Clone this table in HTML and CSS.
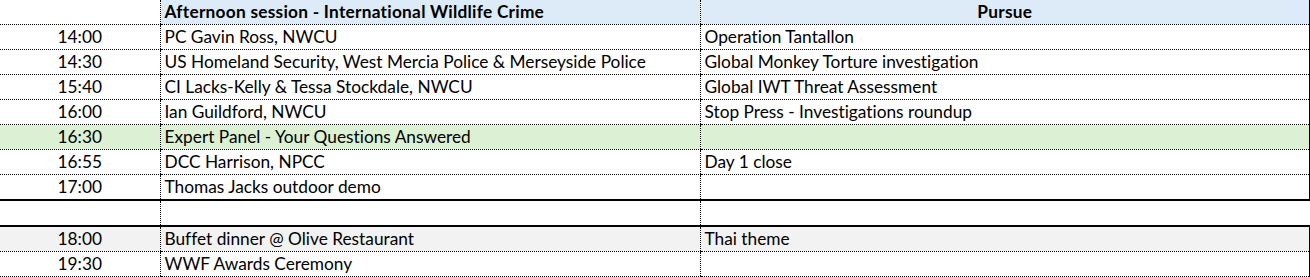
FILE: index.html
```html
<!DOCTYPE html>
<html>
<head>
<meta charset="utf-8">
<link rel="stylesheet" href="styles.css">
</head>
<body>
<table class="sheet">
  <colgroup>
    <col class="c-time">
    <col class="c-event">
    <col class="c-pursue">
  </colgroup>
  <tr class="head">
    <td class="time blank"></td>
    <td class="event bold">Afternoon session - International Wildlife Crime</td>
    <td class="pursue bold center">Pursue</td>
  </tr>
  <tr><td class="time">14:00</td><td class="event">PC Gavin Ross, NWCU</td><td class="pursue">Operation Tantallon</td></tr>
  <tr><td class="time">14:30</td><td class="event">US Homeland Security, West Mercia Police &amp; Merseyside Police</td><td class="pursue">Global Monkey Torture investigation</td></tr>
  <tr><td class="time">15:40</td><td class="event">CI Lacks-Kelly &amp; Tessa Stockdale, NWCU</td><td class="pursue">Global IWT Threat Assessment</td></tr>
  <tr><td class="time">16:00</td><td class="event">Ian Guildford, NWCU</td><td class="pursue">Stop Press - Investigations roundup</td></tr>
  <tr class="green"><td class="time">16:30</td><td class="event">Expert Panel - Your Questions Answered</td><td class="pursue"></td></tr>
  <tr><td class="time">16:55</td><td class="event">DCC Harrison, NPCC</td><td class="pursue">Day 1 close</td></tr>
  <tr class="end"><td class="time">17:00</td><td class="event">Thomas Jacks outdoor demo</td><td class="pursue"></td></tr>
  <tr class="gap"><td class="time"></td><td class="event"></td><td class="pursue"></td></tr>
  <tr class="grey start"><td class="time">18:00</td><td class="event">Buffet dinner @ Olive Restaurant</td><td class="pursue">Thai theme</td></tr>
  <tr><td class="time">19:30</td><td class="event">WWF Awards Ceremony</td><td class="pursue"></td></tr>
</table>
</body>
</html>
```

FILE: styles.css
```css
html, body {
  margin: 0;
  padding: 0;
  background: #ffffff;
}

.sheet {
  border-collapse: collapse;
  table-layout: fixed;
  width: 1310px;
  font-family: Lato, "Liberation Sans", sans-serif;
  font-size: 17.3px;
  font-variant-ligatures: none;
  color: #000000;
}

.c-time { width: 160px; }
.c-event { width: 540px; }
.c-pursue { width: 610px; }

.sheet td {
  height: 24px;
  padding: 0 4px;
  line-height: 24px;
  white-space: nowrap;
  overflow: hidden;
  border-bottom: 1px dotted #000;
  border-left: 1px dotted #000;
  vertical-align: bottom;
}

.sheet td.time {
  text-align: center;
  border-left: none;
}

.sheet td.pursue {
  border-right: 2px solid #000;
}

.head td { background: #dcebf7; }
.head td.blank { background: #ffffff; }
.bold { font-weight: bold; letter-spacing: 0.25px; }
.center { text-align: center; }

.green td { background: #dcf0d4; }
.grey td { background: #f2f2f2; }

.end td { border-bottom: 2px solid #000; }
.gap td.pursue { border-right: 1px dotted #000; }
.start td { border-top: 2px solid #000; }
```
